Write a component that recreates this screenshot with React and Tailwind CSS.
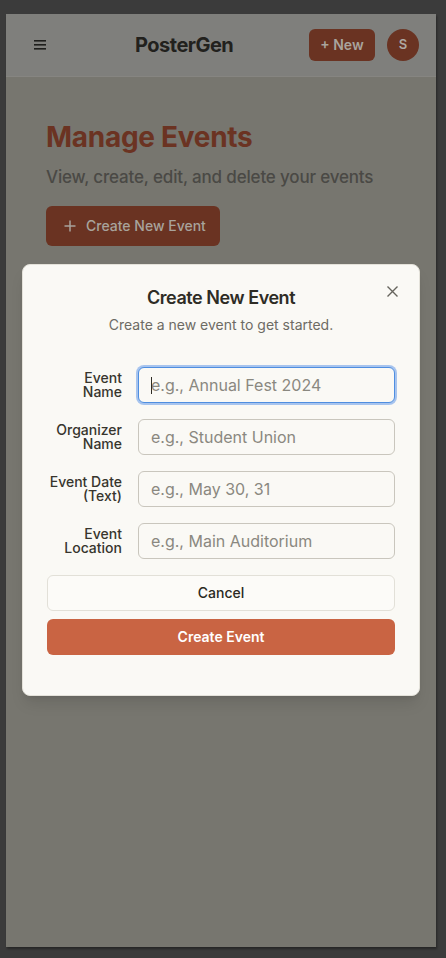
import React from "react";

function Field({ label, placeholder, focused }) {
  return (
    <div className="grid grid-cols-4 items-center gap-4">
      <label className="text-right text-sm font-medium leading-none text-[#37352d]">{label}</label>
      <div className="relative col-span-3">
        <input
          placeholder={placeholder}
          className={
            "h-9 w-full rounded-md bg-[#faf9f5] px-3 text-base text-[#2e2c25] outline-none placeholder:text-[#8a8880] " +
            (focused
              ? "border border-[#4e8ee0] ring-2 ring-[#a7c4ee]"
              : "border border-[#c9c6bd]")
          }
        />
        {focused && <span className="absolute left-[13px] top-[10px] h-[17px] w-px bg-[#2e2c25]" />}
      </div>
    </div>
  );
}

export default function App() {
  return (
    <div className="min-h-[958px] w-[446px] bg-[#3b3b3b] pl-[6px] pt-[14px]" style={{ fontFamily: "Inter, 'Noto Sans', sans-serif" }}>
      <div className="relative flex h-[933px] w-[430px] flex-col bg-[#77766f] shadow-[1px_2px_2px_rgba(0,0,0,0.35)]">
        {/* header */}
        <header className="flex h-[63px] items-center border-b border-[#868581] bg-[#7f7f7c] pl-7 pr-[17px]">
          <svg width="12" height="10" viewBox="0 0 12 10">
            <rect x="0" y="0" width="12" height="1.6" fill="#1e1e1c" />
            <rect x="0" y="4" width="12" height="1.6" fill="#1e1e1c" />
            <rect x="0" y="8" width="12" height="1.6" fill="#1e1e1c" />
          </svg>
          <div className="ml-[89px] text-xl font-bold tracking-tight text-[#22211d]">PosterGen</div>
          <div className="ml-auto flex items-center gap-3">
            <button className="h-8 w-[66px] rounded-md bg-[#6a3322] text-sm font-semibold text-[#a9a49d]">+ New</button>
            <div className="flex h-8 w-8 items-center justify-center rounded-full bg-[#6a3322] text-[13px] font-semibold text-[#aea9a2]">S</div>
          </div>
        </header>

        {/* body */}
        <main className="px-10 pt-[42px]">
          <h1 className="text-[28px] font-bold leading-9 tracking-[-0.01em] text-[#6b3322]">Manage Events</h1>
          <p className="mt-[10px] whitespace-nowrap text-[17px] font-medium tracking-[-0.01em] text-[#4a4945]">View, create, edit, and delete your events</p>
          <button className="mt-[15px] flex h-10 w-[174px] items-center gap-[10px] rounded-md bg-[#6a3322] pl-[18px] text-sm font-medium text-[#a8a39c]">
            <svg width="12" height="12" viewBox="0 0 12 12">
              <path d="M6 0.5V11.5M0.5 6H11.5" stroke="#a8a39c" strokeWidth="1.5" />
            </svg>
            Create New Event
          </button>
        </main>

        {/* dialog overlay */}
        <div className="absolute inset-0 flex items-center justify-center px-4 pb-[2px]">
          <div className="relative w-full rounded-lg border border-[#e4e2da] bg-[#faf9f5] px-6 pb-10 pt-6 shadow-lg">
            <button className="absolute right-[19px] top-[19px] flex h-4 w-4 items-center justify-center">
              <svg width="11" height="11" viewBox="0 0 11 11">
                <path d="M0.5 0.5L10.5 10.5M10.5 0.5L0.5 10.5" stroke="#66645d" strokeWidth="1.4" />
              </svg>
            </button>
            <div className="flex flex-col items-center gap-2 text-center">
              <h2 className="text-lg font-semibold leading-none tracking-tight text-[#2e2c25]">Create New Event</h2>
              <p className="text-sm text-[#6d6b64]">Create a new event to get started.</p>
            </div>
            <div className="mt-8 flex flex-col gap-4">
              <Field label="Event Name" placeholder="e.g., Annual Fest 2024" focused />
              <Field label="Organizer Name" placeholder="e.g., Student Union" />
              <Field label="Event Date (Text)" placeholder="e.g., May 30, 31" />
              <Field label="Event Location" placeholder="e.g., Main Auditorium" />
            </div>
            <div className="mt-4 flex flex-col gap-2">
              <button className="h-9 w-full rounded-md border border-[#e2e0d8] bg-[#fcfbf8] text-sm font-medium text-[#2a2922]">Cancel</button>
              <button className="h-9 w-full rounded-md bg-[#c96443] text-sm font-semibold text-white">Create Event</button>
            </div>
          </div>
        </div>
      </div>
    </div>
  );
}
